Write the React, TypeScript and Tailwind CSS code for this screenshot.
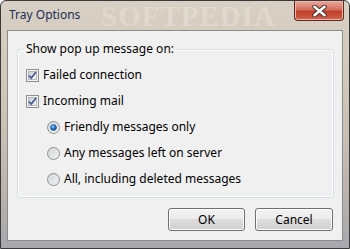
import React from "react";

function CheckBox() {
  return (
    <svg width="13" height="13" viewBox="0 0 13 13" className="shrink-0">
      <defs>
        <linearGradient id="cbg" x1="0" y1="0" x2="1" y2="1">
          <stop offset="0" stopColor="#cbcfd5" />
          <stop offset="1" stopColor="#f6f6f6" />
        </linearGradient>
      </defs>
      <rect x="0.5" y="0.5" width="12" height="12" fill="#f4f4f4" stroke="#8e8f8f" />
      <rect x="2.5" y="2.5" width="8" height="8" fill="url(#cbg)" stroke="#b3b8bd" />
      <path d="M3 6.5 L5.2 9 L10 3" fill="none" stroke="#4a5f97" strokeWidth="1.8" />
    </svg>
  );
}

function Radio({ checked }: { checked?: boolean }) {
  return (
    <svg width="13" height="13" viewBox="0 0 13 13" className="shrink-0">
      <defs>
        <linearGradient id="rbg" x1="0" y1="0" x2="1" y2="1">
          <stop offset="0" stopColor="#c9ccd1" />
          <stop offset="1" stopColor="#fafafa" />
        </linearGradient>
        <radialGradient id="rdot" cx="0.4" cy="0.35" r="0.7">
          <stop offset="0" stopColor="#8ad0ff" />
          <stop offset="0.5" stopColor="#2a7ccb" />
          <stop offset="1" stopColor="#0d3c78" />
        </radialGradient>
      </defs>
      <circle cx="6.5" cy="6.5" r="6" fill="url(#rbg)" stroke="#8e8f8f" />
      <circle cx="6.5" cy="6.5" r="4.3" fill="none" stroke="#e4e6e8" />
      {checked && <circle cx="6.5" cy="6.5" r="3" fill="url(#rdot)" stroke="#1c4f8a" strokeWidth="0.6" />}
    </svg>
  );
}

function Button({ label, width }: { label: string; width: string }) {
  return (
    <button
      className={`${width} h-[23px] rounded-[3px] border border-[#707070] bg-[linear-gradient(#f2f2f2_0%,#ebebeb_50%,#dddddd_50%,#cfcfcf_100%)] text-[12px] text-black shadow-[inset_0_0_0_1px_#fcfcfc]`}
    >
      {label}
    </button>
  );
}

export default function App() {
  const font = { fontFamily: '"Segoe UI", "Noto Sans", sans-serif' };

  return (
    <div
      className="w-[350px] h-[249px] flex flex-col overflow-hidden rounded-t-[6px] border border-[#3a3a3a] bg-[linear-gradient(#d8d0c4_0%,#cfc6ba_40%,#bdb5ad_75%,#a7a7ae_100%)]"
      style={font}
    >
      {/* Title bar */}
      <div className="relative h-[29px] flex items-start shrink-0">
        <span className="pl-[8px] pt-[6px] text-[12px] leading-[16px] text-[#1c2e55]">Tray Options</span>
        <span className="pointer-events-none absolute left-[100px] top-[1px] text-[29px] leading-[28px] font-bold tracking-[1px] text-[#e4ddd3]/70 blur-[0.6px] [font-family:'Liberation_Serif',serif]">
          SOFTPEDIA
        </span>
        <div className="relative ml-auto mr-[5px] w-[50px] h-[20px] rounded-b-[4px] border border-t-0 border-[#5a2a22] bg-[linear-gradient(#e9a99b_0%,#d4715e_45%,#c0402b_55%,#d0604a_100%)] flex items-center justify-center shadow-[inset_0_0_0_1px_#f0b3a6]">
          <svg width="15" height="12" viewBox="0 0 15 12">
            <path d="M2.5 1.8 L12.5 10.2 M12.5 1.8 L2.5 10.2" stroke="#3a2a2a" strokeWidth="4.4" strokeLinecap="round" />
            <path d="M2.5 1.8 L12.5 10.2 M12.5 1.8 L2.5 10.2" stroke="#ffffff" strokeWidth="2.6" strokeLinecap="round" />
          </svg>
        </div>
      </div>

      {/* Client area */}
      <div className="mx-[6px] h-[211px] shrink-0 border border-[#8c8c8c] bg-[#f0f0f0] flex flex-col text-[12px] text-black">
        <fieldset className="mt-[10px] ml-[9px] mr-[8px] rounded-[3px] border border-[#d5dfe5] pl-[6px] pr-[6px] pt-[5px] pb-[5px] shadow-[inset_0_0_0_1px_#ffffff]">
          <legend className="px-[2px] leading-[16px]">Show pop up message on:</legend>
          <div className="flex flex-col">
            <div className="h-[26px] flex items-center gap-[4px] ml-[2px]">
              <CheckBox />
              <span>Failed connection</span>
            </div>
            <div className="h-[26px] flex items-center gap-[4px] ml-[2px]">
              <CheckBox />
              <span>Incoming mail</span>
            </div>
            <div className="h-[26px] flex items-center gap-[4px] ml-[23px]">
              <Radio checked />
              <span>Friendly messages only</span>
            </div>
            <div className="h-[26px] flex items-center gap-[4px] ml-[23px]">
              <Radio />
              <span>Any messages left on server</span>
            </div>
            <div className="h-[26px] flex items-center gap-[4px] ml-[23px]">
              <Radio />
              <span>All, including deleted messages</span>
            </div>
          </div>
        </fieldset>

        <div className="mt-[10px] flex justify-end gap-[10px] pr-[9px]">
          <Button label="OK" width="w-[77px]" />
          <Button label="Cancel" width="w-[78px]" />
        </div>
      </div>
    </div>
  );
}
